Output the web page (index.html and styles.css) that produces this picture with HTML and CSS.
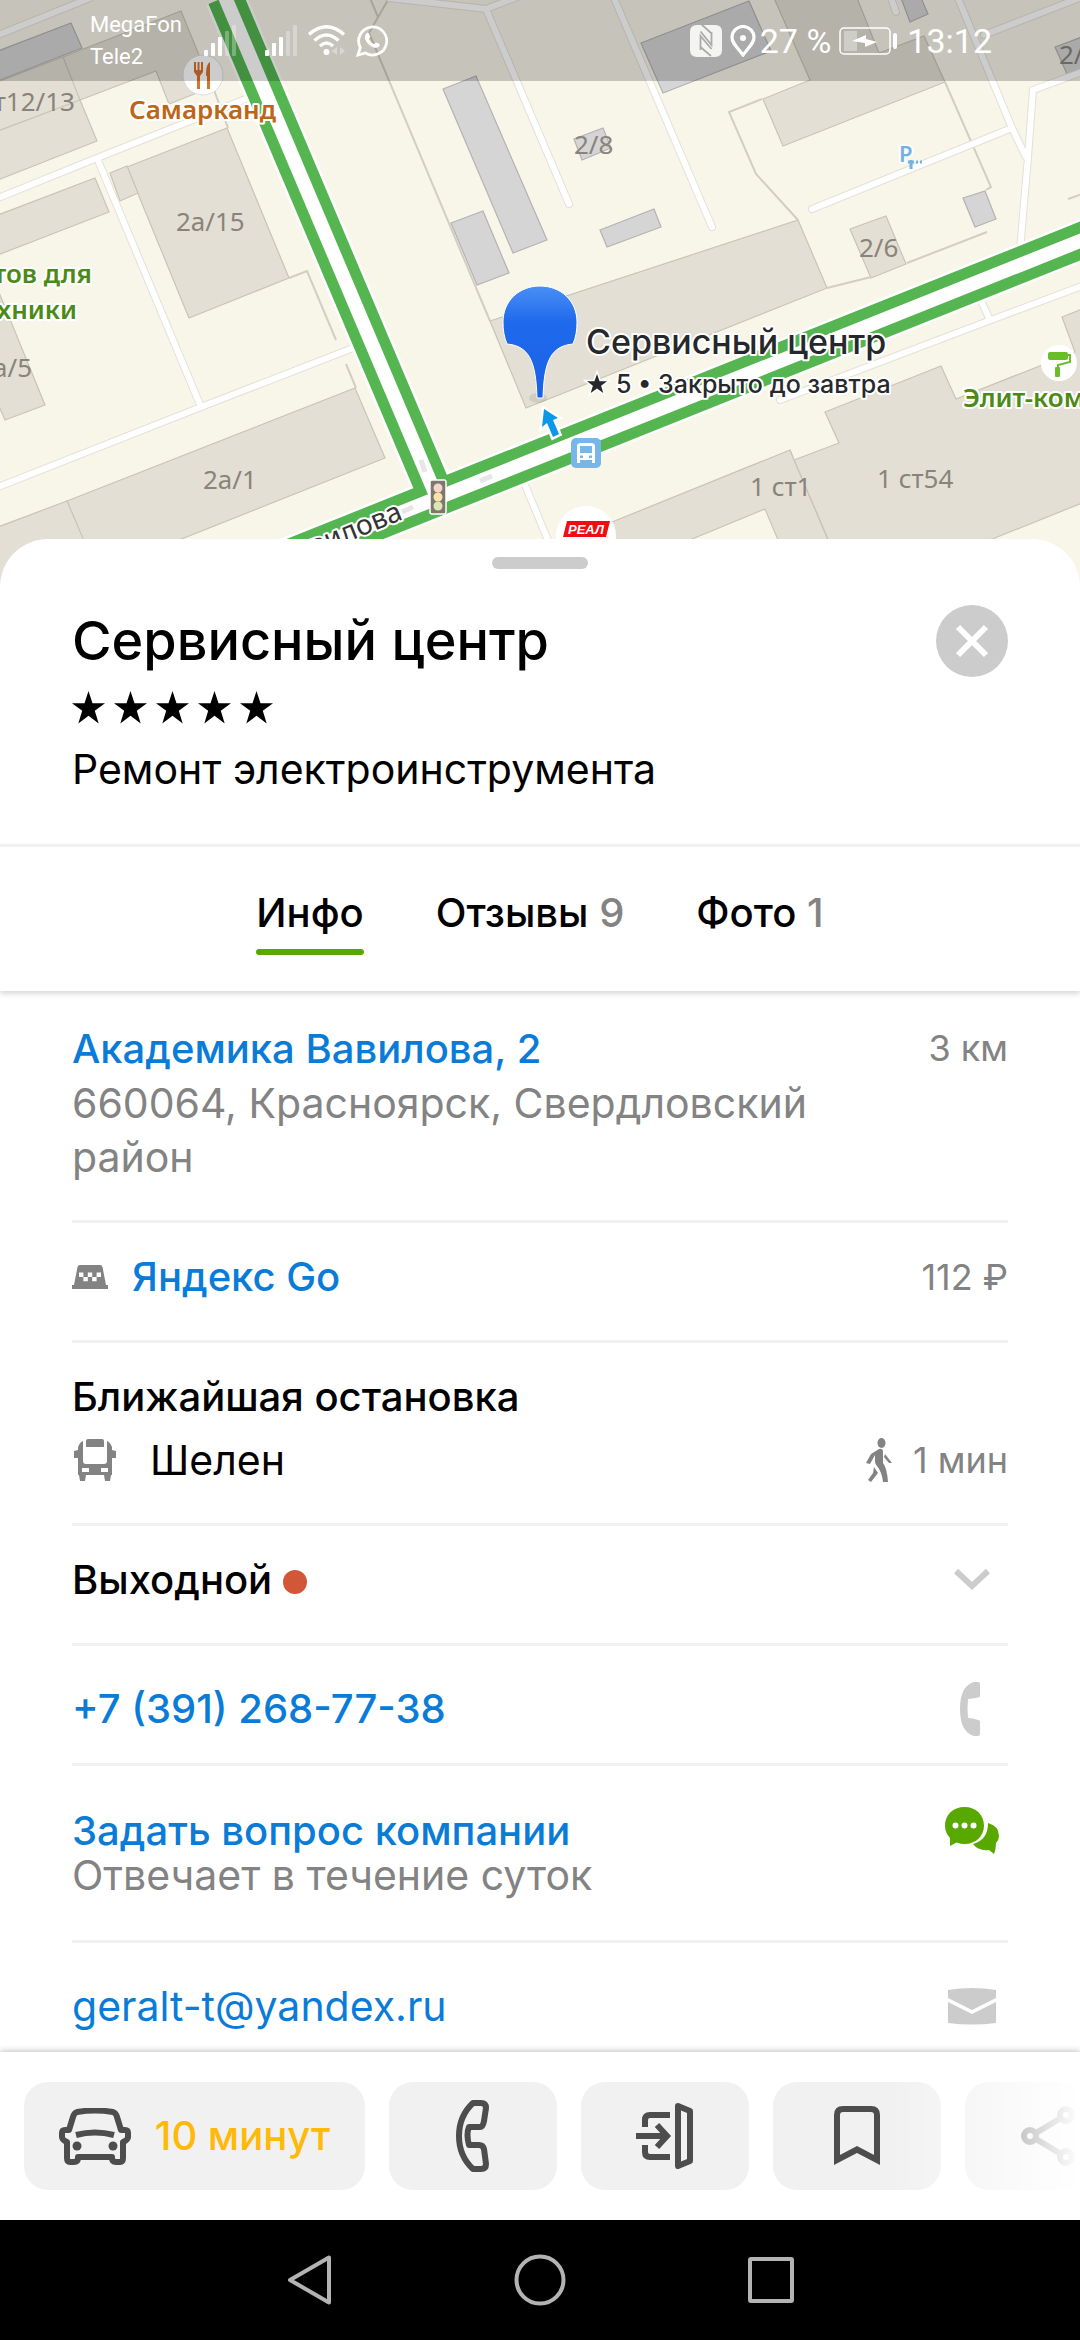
FILE: index.html
```html
<!DOCTYPE html>
<html lang="ru">
<head>
    <meta charset="UTF-8">
    <meta name="viewport" content="width=device-width, initial-scale=1.0">
    <title>Сервисный центр</title>
    <link rel="stylesheet" href="styles.css">
</head>
<body>
    <div class="app">
      <header class="status">
        <div class="carriers"><span>MegaFon</span><span>Tele2</span></div>
        <svg class="signal" width="33" height="31" viewBox="0 0 33 31" fill="#fff"><rect y="25" width="4" height="6" rx="1"/><rect x="7" y="18" width="4" height="13" rx="1"/><rect x="14" y="12" width="4" height="19" rx="1"/><g opacity=".3"><rect x="21" y="6" width="4" height="25" rx="1"/><rect x="28" width="4" height="31" rx="1"/></g></svg>
        <svg class="signal" width="33" height="31" viewBox="0 0 33 31" fill="#fff"><rect y="25" width="4" height="6" rx="1"/><rect x="7" y="18" width="4" height="13" rx="1"/><rect x="14" y="12" width="4" height="19" rx="1"/><g opacity=".3"><rect x="21" y="6" width="4" height="25" rx="1"/><rect x="28" width="4" height="31" rx="1"/></g></svg>
        <svg width="38" height="31" viewBox="0 0 38 31" fill="none" stroke="#fff" stroke-width="3.4"><path d="M1 9.500Q18.500-6 36 9.500M6.500 15.500Q18.500 4.500 30.500 15.500M12 21Q18.500 15 25 21"/><circle cx="18.500" cy="27" r="3" fill="#fff" stroke="none"/><path d="M24 26l5-4v8zM32 22l5 4-5 4z" fill="#fff" stroke="none" opacity=".35"/></svg>
        <svg class="whatsapp" width="32" height="32" viewBox="0 0 32 32"><path d="M2 30l2.300-7.500A14 14 0 1 1 9.500 28z" fill="none" stroke="#fff" stroke-width="2.800"/><path d="M10.500 8.500c1-1 2.300-.8 2.700.3l1 2.700c.2.700-1.500 2-1.300 2.600 1 2.200 2.800 4 5 5 .7.300 1.800-1.900 2.600-1.600l2.800 1.300c.8.500.5 2-.3 2.800-1.700 1.600-4 1.500-6.500.3-3.500-1.700-6-4.300-7.200-7.400-.8-2.300-.4-4.400 1.200-6z" fill="#fff"/></svg>
        <div class="status_right">
          <svg class="nfc" width="32" height="32" viewBox="0 0 32 32"><path d="M7 0h18q7 0 7 7v18q0 7-7 7H7q-7 0-7-7V7q0-7 7-7z" fill="#f4f4f2"/><path d="M10.500 25V11L21.500 24M10.500 6.500L21.500 20V7M10.500 22L21 31M22-1l-11 0 10 9" fill="none" stroke="#ababab" stroke-width="1.800"/></svg>
          <svg class="geo" width="26" height="32" viewBox="0 0 26 32"><path d="M13 30C6 21 2 17.500 2 12.500a11 11 0 0 1 22 0C24 17.500 20 21 13 30z" fill="none" stroke="#fff" stroke-width="3.200"/><circle cx="13" cy="13" r="3" fill="#fff"/></svg>
          <span>27 %</span>
          <svg class="battery" width="60" height="28" viewBox="0 0 60 28"><rect x="1" y="1" width="50" height="26" rx="4" fill="none" stroke="#fff" stroke-width="1.500"/><rect x="5" y="4" width="13" height="20" fill="#fff" opacity=".35"/><path d="M13 14l14-6v4l11 3-12 5v-4z" fill="#fff"/><rect x="54" y="6" width="4" height="16" rx="2" fill="#fff"/></svg>
          <span>13:12</span>
        </div>
      </header>

      <svg class="map" viewBox="0 0 1080 587" preserveAspectRatio="xMidYMin slice">
        <defs>
          <linearGradient id="pin" x1="0" y1="0" x2="0" y2="1">
            <stop offset="0" stop-color="#4a8ff6"/>
            <stop offset=".32" stop-color="#1f6aec"/>
            <stop offset="1" stop-color="#1a60e6"/>
          </linearGradient>
        </defs>
        <!-- houses -->
        <g class="house">
          <path d="M-2 82L63 57 181 11 212 87 169 104 156 71 80 100 63 57 80 100 97 141-2 180zM-2 131L80 100"/>
          <path d="M127 167L227 128 289 278 189 318z"/>
          <path d="M110 173L127 166 138 193 120 201z"/>
          <path d="M-2 215L95 178 109 212-2 255z"/>
          <path d="M-2 290L45 405 5 420-2 404z"/>
          <path d="M67 501L355 388 385 458 96 573z"/>
          <path d="M-2 527L67 501 105 590-2 590z"/>
          <path d="M774-2L810 80 763 99 783 146 945 82 924 36 879 53 857-2z"/>
          <path d="M850 229L886 216 906 264 871 278z"/>
          <path d="M490 321L798 220 827 288 526 408z"/>
          <path d="M790 450L794 460 839 443 825 412 941 366 956 399 1075 352 1062 317 1082 309V503L975 546 831 546 794 460z"/>
          <path d="M790 450L612 522 580 535 590 580 675 546 765 509 795 580H845L794 460z"/>
        </g>
        <g class="shed">
          <path d="M-2 51L71 23 82 48-2 81z"/>
          <path d="M443 89L476 76 547 240 513 253z"/>
          <path d="M451 223L483 211 509 273 477 285z"/>
          <path d="M641 43L749 1 771 51 663 93z"/>
          <path d="M901-2L910 22 928 14 921-2z"/>
          <path d="M1055 47L1082 37V69L1067 74z"/>
          <path d="M574 139L603 128 611 148 582 160z"/>
          <path d="M600 230L654 209 661 227 607 247z"/>
          <path d="M963 198L985 191 996 219 975 227z"/>
        </g>
        <!-- fences -->
        <path class="fence" d="M389-2L369 33 490 321M370-2L378 17M762 99L729 112 756 174 798 220M945 82L991 187 986 190M907 263L987 232M827 288L871 277M1068 199L1082 194M289 278L307 271 336 340M346 364L356 388M214 90L228 128"/>
        <!-- small streets, the wide pass is the edge -->
        <path class="street_edge" d="M-2 35L90-2M-2 198L97 158 248 98M97 158L201 407M-2 487L201 407 353 348M614-2L712 227M389-2L486 9 520-4M486 9L569 204M958-2L1012 128 1026 157M1082 72L1033 90 1028 157 1020 250M812 209L1012 128M984 35L1082-3M891-2L896 12M1082 286L991 320 780 400M982 303L990 320M525 485L552 550"/>
        <path class="street" d="M-2 35L90-2M-2 198L97 158 248 98M97 158L201 407M-2 487L201 407 353 348M614-2L712 227M389-2L486 9 520-4M486 9L569 204M958-2L1012 128 1026 157M1082 72L1033 90 1028 157 1020 250M812 209L1012 128M984 35L1082-3M891-2L896 12M1082 286L991 320 780 400M982 303L990 320M525 485L552 550"/>
        <!-- traffic roads -->
        <g fill="none">
          <path stroke="#fff" stroke-width="41" d="M225-3L435 493M230 581L1100 233"/>
          <path stroke="#54b551" stroke-width="36" d="M225-3L435 493M230 581L1100 233"/>
          <path stroke="#fff" stroke-width="14" d="M225-3L435 493M230 581L1100 233"/>
          <path stroke="#e6e6e6" stroke-width="5" d="M421 460L425 472M480 481L492 476M402 512L413 507"/>
        </g>

        <g class="num">
          <text x="75" y="111" text-anchor="end">ст12/13</text>
          <text x="176" y="231">2а/15</text>
          <text x="32" y="377" text-anchor="end">2а/5</text>
          <text x="203" y="489">2а/1</text>
          <text x="574" y="154">2/8</text>
          <text x="859" y="257">2/6</text>
          <text x="1059" y="64">2/5</text>
          <text x="750" y="496">1 ст1</text>
          <text x="877" y="488">1 ст54</text>
        </g>
        <circle cx="203" cy="75" r="20" fill="#fff" stroke="#ddd"/>
        <path d="M194 62h2v8h1.500v-8h2v8h1.500v-8h2v10l-3 4v13h-3V76l-3-4zM210 62v27h-3V76h-1c0-8 1-12 4-14z" fill="#d8742c"/>
        <text class="poi poi_food" x="129" y="119">Самарканд</text>
        <text class="poi" x="92" y="283" text-anchor="end">тов для</text>
        <text class="poi" x="77" y="319" text-anchor="end">хники</text>
        <text class="poi" x="963" y="407">Элит-комфорт</text>
        <text class="parking" x="899" y="162">Р</text>
        <path d="M908 162h2M912 162h2M916 162h2M920 162h2M911 160v9" stroke="#73b2e3" stroke-width="3"/>
        <text class="street_name" transform="translate(404 519) rotate(-22)" text-anchor="end">Вавилова</text>

        <circle cx="1059" cy="363" r="18" fill="#fff"/>
        <path d="M1050 352h16q2 0 2 2v4q0 2-2 2h-16q-2 0-2-2v-4q0-2 2-2zM1055 368q0-1 1-1h3q1 0 1 1v8q0 1-1 1h-3q-1 0-1-1z" fill="#69be28"/>
        <path d="M1068 355h2v7l-12 3v4" fill="none" stroke="#69be28" stroke-width="2"/>

        <rect x="430" y="480" width="16" height="34" rx="2" fill="#7d786b" stroke="#fff" stroke-width="1.500"/>
        <circle cx="438" cy="488" r="4.500" fill="#f6d5cf"/><circle cx="438" cy="497" r="4.500" fill="#f8e4a8"/><circle cx="438" cy="506" r="4.500" fill="#dde5b8"/>

        <circle cx="586" cy="536" r="30" fill="#fff"/>
        <path d="M567 521h43l-4 16h-43z" fill="#f30b12"/>
        <text class="real" x="568" y="534">РЕАЛ</text>

        <rect x="571" y="438" width="30" height="30" rx="5" fill="#76b6e8"/>
        <path d="M577 463V446q0-3 4-3h10q4 0 4 3v17h-3v-3h-12v3zM580 446v7h12v-7zM580 455.500v2.500h3v-2.500zM589 455.500v2.500h3v-2.500z" fill="#fff" fill-rule="evenodd"/>

        <path d="M544 409l14 9-5 2 6 14-6 3-6-14-5 4z" fill="#0a98e8" stroke="#fff" stroke-width="5" paint-order="stroke"/>
        <ellipse cx="538" cy="398" rx="9" ry="5" fill="#000" opacity=".08"/>
        <path d="M540 286c21 0 37 15 37 36 0 8-1 15-4 22-22 2-29 17-30 54h-6c-1-37-8-52-30-54-3-7-4-14-4-22 0-21 16-36 37-36z" fill="url(#pin)" stroke="#fff" stroke-width="1"/>
        <text class="pin_title" x="586" y="354">Сервисный центр</text>
        <path d="M597 374l2.600 7.200h7.400l-5.900 4.500 2.200 7.300-6.300-4.400-6.300 4.400 2.200-7.300-5.900-4.500h7.400z" fill="#26282b" stroke="#fff" stroke-width="3" paint-order="stroke"/>
        <text class="pin_note" x="616" y="393">5 • Закрыто до завтра</text>
      </svg>

      <main class="sheet">
        <div class="handle"></div>
        <div class="head">
          <div class="head_text">
            <h1>Сервисный центр</h1>
            <svg class="stars" width="202" height="33" viewBox="0 0 202 33"><defs><path id="star" d="M16.500 0l4 12.200H33l-10.200 7.600 3.900 12.700-10.200-7.700-10.200 7.700 3.900-12.700L0 12.200h12.500z"/></defs><use href="#star"/><use href="#star" x="42"/><use href="#star" x="84"/><use href="#star" x="126"/><use href="#star" x="168"/></svg>
            <p>Ремонт электроинструмента</p>
          </div>
          <button class="close" aria-label="Закрыть"><svg width="72" height="72" viewBox="0 0 72 72"><circle cx="36" cy="36" r="36" fill="#ccc"/><path d="M22 22L50 50M50 22L22 50" stroke="#fff" stroke-width="6"/></svg></button>
        </div>
        <nav class="tabs">
          <button class="tab tab_active">Инфо</button>
          <button class="tab">Отзывы <span>9</span></button>
          <button class="tab">Фото <span>1</span></button>
        </nav>

        <div class="list">
          <div class="row row_address">
            <div class="row_text">
              <a href="#" class="strong">Академика Вавилова, 2</a>
              <p class="gray">660064, Красноярск, Свердловский район</p>
            </div>
            <span class="side">3 км</span>
          </div>
          <div class="row">
            <svg class="taxi" width="36" height="24" viewBox="0 0 36 24"><path d="M8 0h20q2 0 2.500 2L34 20h2v4H0v-4h2L5.500 2Q6 0 8 0z" fill="#838383"/><path d="M7 7.500h4.400v4.400H7zM15.800 7.500h4.400v4.400h-4.400zM24.600 7.500H29v4.400h-4.400zM11.400 11.900h4.400v4.400h-4.400zM20.200 11.900h4.400v4.400h-4.400z" fill="#fff"/></svg>
            <a href="#" class="strong row_text">Яндекс Go</a>
            <span class="side">112 ₽</span>
          </div>
          <div class="row row_stop">
            <h2>Ближайшая остановка</h2>
            <div class="stop">
              <svg class="bus" width="42" height="42" viewBox="0 0 42 42"><path d="M14 0h14q2 0 2 2v6H12V2q0-2 2-2zM4 8q2-5 5-6v20q0 3 3 3h18q3 0 3-3V2q3 1 5 6v3l4 1v7h-4v17h-1l-1 6h-5l-1-6H12l-1 6H6l-1-6H4V19H0v-7l4-1zM8 29v4h7v-4zM27 29v4h7v-4z" fill="#838383" fill-rule="evenodd"/></svg>
              <span class="row_text">Шелен</span>
              <svg class="walk" width="26" height="45" viewBox="0 0 26 45" fill="#838383"><ellipse cx="15.500" cy="5" rx="4" ry="5"/><path d="M13 11q4-1 4 3v11q4 5 5 19h-5q-1-10-6-16-2-2-2-5v-6l-5 9-4-1 5-9zM19 16l7 9h-3l-5-6zM8 29l4 6-7 9-3-2 5-7z"/></svg>
              <span class="side">1 мин</span>
            </div>
          </div>
          <div class="row">
            <h2 class="row_text">Выходной <i class="dot"></i></h2>
            <button class="icon" aria-label="Показать график"><svg width="36" height="22" viewBox="0 0 36 22"><path d="M2 2L18 17 34 2" fill="none" stroke="#ccc" stroke-width="6"/></svg></button>
          </div>
          <div class="row row_phone">
            <a href="tel:+73912687738" class="strong row_text">+7 (391) 268-77-38</a>
            <span class="icon"><svg width="24" height="54" viewBox="0 0 24 54"><path d="M14 0h4q2 0 2 2v12q0 1-2 1.500-5 1-10 1.500Q7 27 8 36q5 0 10 2 2 0 2 1.500V52q0 2-2 2h-4Q0 50 0 27 0 4 14 0z" fill="#ccc"/></svg></span>
          </div>
          <div class="row row_ask">
            <div class="row_text">
              <a href="#" class="strong">Задать вопрос компании</a>
              <p class="gray">Отвечает в течение суток</p>
            </div>
            <span class="icon"><svg width="54" height="47" viewBox="0 0 54 47"><path d="M43 16q11 3 11 13 0 4-3 7 0 6-2 11l-5-4q-11 1-16-6 15-4 15-21z" fill="#59a800"/><path d="M19.500 0C31 0 39 8 39 18.500S31 37 19.500 37q-4 0-8-1.500L5 39v-8Q0 26 0 18.500C0 8 8 0 19.500 0z" fill="#59a800"/><g fill="#fff"><circle cx="10.500" cy="18.500" r="3"/><circle cx="19.500" cy="18.500" r="3"/><circle cx="28.500" cy="18.500" r="3"/></g></svg></span>
          </div>
          <div class="row row_phone">
            <a href="mailto:geralt-t@yandex.ru" class="row_text">geralt-t@yandex.ru</a>
            <span class="icon"><svg width="48" height="37" viewBox="0 0 48 37" fill="#ccc"><path d="M0 2Q24-2 48 2v8L24 22 0 10zM0 14L24 26 48 14V35Q24 38 0 35z"/></svg></span>
          </div>
        </div>
      </main>

      <div class="actions">
        <button class="action action_route">
          <svg width="72" height="57" viewBox="0 0 72 57" fill="none" stroke="#4d4d4d" stroke-width="6"><path d="M18 4Q36 1 54 4 57 5 58 9L62 22H66Q69 22 69 25V29Q69 32 64 34V50Q64 54 61 54H57Q53 54 53 50V49H19V50Q19 54 15 54H11Q8 54 8 50V34Q3 32 3 29V25Q3 22 6 22H10L14 9Q15 5 18 4zM17 27Q36 22 55 27" stroke-linejoin="round"/><circle cx="18" cy="38" r="4.500" fill="#4d4d4d" stroke="none"/><circle cx="54" cy="38" r="4.500" fill="#4d4d4d" stroke="none"/></svg>
          <span>10 минут</span>
        </button>
        <button class="action" aria-label="Позвонить"><svg width="34" height="72" viewBox="0 0 34 72" fill="none" stroke="#4d4d4d" stroke-width="6" stroke-linejoin="round"><path d="M17 3H25Q30 3 30 8L28 21Q27 27 24 27H13Q10 34 13 45H23Q27 45 28 49L30 64Q30 69 25 69H17Q3 56 3 36 3 16 17 3z"/></svg></button>
        <button class="action" aria-label="Вход"><svg width="58" height="66" viewBox="0 0 58 66" fill="none" stroke="#4d4d4d" stroke-width="6"><path d="M34 12H14Q9 12 9 17V24M9 42V49Q9 54 14 54H34M0 33H31M21 22L31 33 21 44"/><path d="M42 3L54 8V58L42 63z" stroke-linejoin="round"/></svg></button>
        <button class="action" aria-label="Сохранить"><svg width="46" height="60" viewBox="0 0 46 60" fill="none" stroke="#4d4d4d" stroke-width="6"><path d="M3 54V9Q3 3 9 3H37Q43 3 43 9V54L23 43.500z"/></svg></button>
        <button class="action" aria-label="Поделиться"><svg width="56" height="60" viewBox="0 0 56 60" fill="none" stroke="#4d4d4d" stroke-width="6"><circle cx="9" cy="30" r="6"/><circle cx="45" cy="9" r="6"/><circle cx="45" cy="51" r="6"/><path d="M15 27L40 12M15 33L40 48"/></svg></button>
      </div>

      <footer class="navbar">
        <button aria-label="Назад"><svg width="48" height="52" viewBox="0 0 48 52"><path d="M44 3.500V48.500L5 26z"/></svg></button>
        <button aria-label="Домой"><svg width="52" height="52" viewBox="0 0 52 52"><circle cx="26" cy="26" r="23.500"/></svg></button>
        <button aria-label="Недавние"><svg width="48" height="48" viewBox="0 0 48 48"><rect x="3" y="3" width="42" height="42" rx="1"/></svg></button>
      </footer>
    </div>
</body>
</html>
```
FILE: styles.css
```css
*{
  box-sizing: border-box;
}
body{
  margin: 0;
  background-color: #fff;
  color: #000;
  font-family: Inter, "Liberation Sans", sans-serif;
  font-size: 41px;
  line-height: 54px;
}
svg{
  display: block;
  flex: none;
}
h1, h2, p{
  margin: 0;
  font-weight: 500;
}
a{
  color: #0a7cd8;
  text-decoration: none;
}
button{
  padding: 0;
  border: 0;
  background: none;
  color: inherit;
  font: inherit;
}
.app{
  position: relative;
  display: flex;
  flex-direction: column;
  height: 100vh;
}

/* system bar over the map */
.status{
  position: absolute;
  top: 0;
  left: 0;
  right: 0;
  display: flex;
  align-items: center;
  gap: 10px;
  height: 81px;
  padding: 0 88px 0 90px;
  background-color: rgba(0, 0, 0, 0.2);
  color: #fff;
  font-family: Roboto, sans-serif;
  font-size: 34px;
}
.carriers{
  display: flex;
  flex-direction: column;
  width: 104px;
  font-size: 22px;
  line-height: 32px;
}
.signal{
  margin-right: 18px;
}
.signal + .signal{
  margin-right: 0;
}
.status_right{
  display: flex;
  align-items: center;
  gap: 8px;
  margin-left: auto;
}
.geo{
  margin-right: -4px;
}

.map{
  width: 100%;
  height: 587px;
  background-color: #f8f5e9;
}
.house{
  fill: #e3dfd4;
  stroke: #c9c5b5;
  stroke-width: 1.2;
}
.shed{
  fill: #d5d5d5;
  stroke: #b3b3b3;
  stroke-width: 1.2;
}
.fence{
  fill: none;
  stroke: #d2cec2;
  stroke-width: 2;
}
.street, .street_edge{
  fill: none;
  stroke: #fff;
  stroke-width: 6;
  stroke-linecap: round;
}
.street_edge{
  stroke: #e4e1d8;
  stroke-width: 8;
}
.num{
  fill: #89847b;
  font-family: "Noto Sans", sans-serif;
  font-size: 26px;
}
.poi, .street_name, .parking, .pin_title, .pin_note{
  fill: #4c8a17;
  stroke: #fff;
  stroke-width: 4;
  stroke-linejoin: round;
  paint-order: stroke;
  font-family: "Noto Sans", sans-serif;
  font-size: 26px;
  font-weight: 600;
}
.poi_food{
  fill: #bd6616;
}
.parking{
  fill: #73b2e3;
  font-size: 22px;
}
.street_name{
  fill: #333;
  font-size: 28px;
  font-weight: 400;
}
.real{
  fill: #fff;
  font-family: "Liberation Sans", sans-serif;
  font-size: 13px;
  font-weight: 700;
  font-style: italic;
}
.pin_title, .pin_note{
  fill: #26282b;
  font-family: Inter, sans-serif;
  font-weight: 500;
}
.pin_title{
  font-size: 34px;
}
.pin_note{
  font-size: 25px;
}

.sheet{
  position: relative;
  display: flex;
  flex-direction: column;
  flex: 1;
  min-height: 0;
  margin-top: -48px;
  padding-top: 18px;
  border-radius: 48px 48px 0 0;
  background-color: #fff;
  overflow: hidden;
}
.handle{
  flex: none;
  align-self: center;
  width: 96px;
  height: 12px;
  border-radius: 6px;
  background-color: #ccc;
}
.head{
  display: flex;
  justify-content: space-between;
  align-items: flex-start;
  padding: 36px 72px 48px;
}
h1{
  font-size: 54px;
  line-height: 72px;
}
.stars{
  margin: 14px 0 18px;
}
.head p, .gray{
  font-weight: 400;
}
.tabs{
  display: flex;
  flex: none;
  justify-content: center;
  gap: 72px;
  padding: 39px 0 36px;
  border-top: 3px solid #f1f1f1;
  box-shadow: 0 3px 5px rgba(0, 0, 0, 0.15);
}
.tab, h2, .strong{
  font-size: 40px;
  font-weight: 500;
}
.tab::after{
  content: "";
  display: block;
  height: 6px;
  margin-top: 9px;
  border-radius: 3px;
}
.tab_active::after{
  background-color: #59a800;
}
.tab span, .gray, .side{
  color: #838383;
}

.list{
  min-height: 0;
  padding: 0 72px;
}
.row{
  display: flex;
  padding: 27px 0 36px;
  border-bottom: 3px solid #f1f1f1;
}
.row_text{
  flex: 1;
}
.row_address{
  padding-top: 30px;
}
.row_address p{
  max-width: 800px;
}
.row_stop{
  flex-direction: column;
  gap: 9px;
}
.row_phone{
  padding: 36px 0 27px;
}
.row_ask{
  padding: 42px 0;
  line-height: 45px;
}
.side{
  font-size: 36px;
}
.taxi{
  margin: 15px 24px 0 0;
}
.stop{
  display: flex;
  align-items: center;
}
.bus{
  margin: 0 34px 0 2px;
}
.walk{
  margin-right: 21px;
}
.dot{
  display: inline-block;
  width: 24px;
  height: 24px;
  border-radius: 50%;
  background-color: #d25738;
}
.icon{
  display: flex;
  align-items: center;
  justify-content: center;
  width: 72px;
  height: 54px;
}
.row_ask .icon{
  height: 45px;
}

.actions{
  position: relative;
  display: flex;
  flex: none;
  gap: 24px;
  padding: 30px 0 30px 24px;
  background-color: #fff;
  box-shadow: 0 -1px 6px rgba(0, 0, 0, 0.25);
  overflow: hidden;
  clip-path: inset(-9px 0 0 0);
}
.actions::after{
  content: "";
  position: absolute;
  top: 0;
  right: 0;
  bottom: 0;
  width: 192px;
  background: linear-gradient(to right, rgba(255, 255, 255, 0), #fff);
}
.action{
  display: flex;
  flex: none;
  align-items: center;
  justify-content: center;
  gap: 24px;
  width: 168px;
  height: 108px;
  border-radius: 24px;
  background-color: #f1f1f1;
}
.action_route{
  width: 341px;
  color: #ffb90a;
  font-size: 40px;
  font-weight: 500;
}

.navbar{
  display: flex;
  flex: none;
  align-items: center;
  justify-content: center;
  gap: 181px;
  height: 120px;
  background-color: #000;
}
.navbar svg{
  fill: none;
  stroke: #b3b3b3;
  stroke-width: 4;
  stroke-linejoin: round;
}
```
